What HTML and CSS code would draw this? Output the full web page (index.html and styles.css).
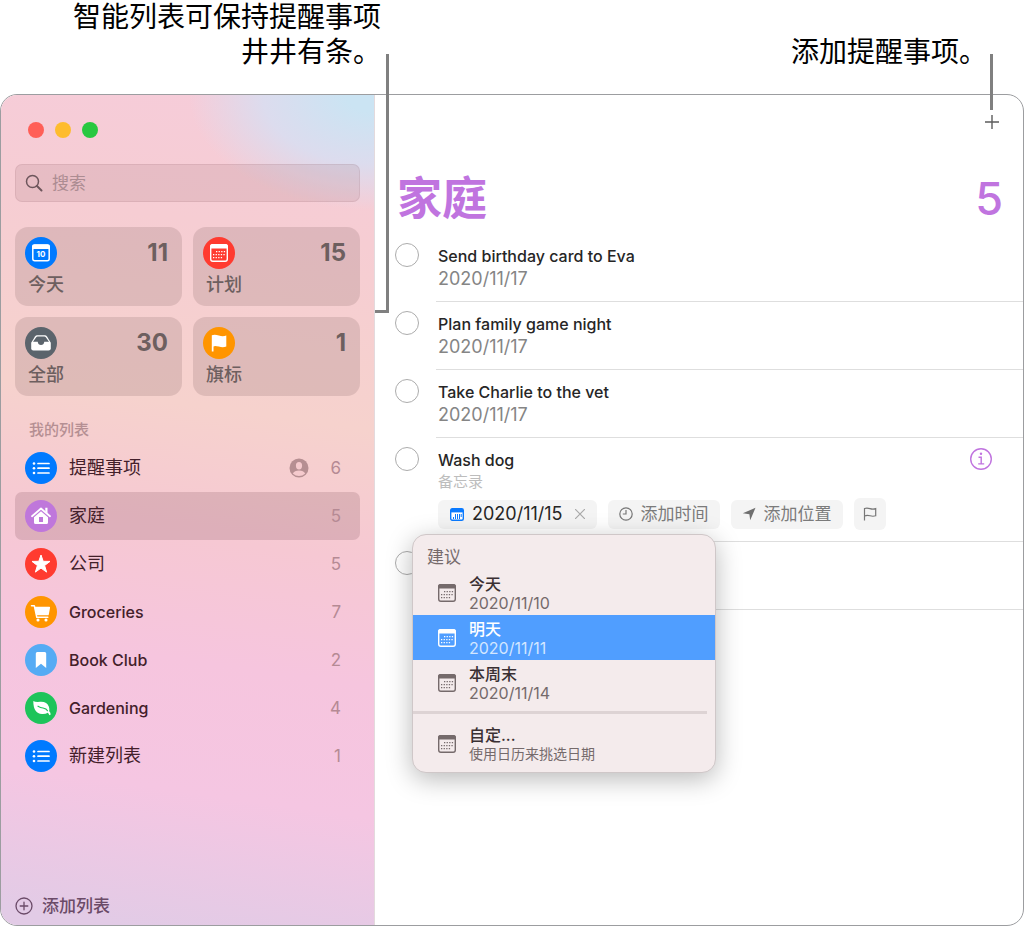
FILE: index.html
```html
<!DOCTYPE html>
<html lang="zh-CN">
<head>
  <meta charset="UTF-8">
  <meta name="viewport" content="width=device-width, initial-scale=1.0">
  <title>提醒事项</title>
  <link rel="stylesheet" href="styles.css">
</head>
<body>
  <svg class="defs" aria-hidden="true">
    <symbol id="i-cal" viewBox="0 0 20 20">
      <rect x="1.700" y="1.700" width="16.600" height="16.600" rx="2.200" fill="none" stroke="currentColor" stroke-width="1.400"/>
      <path d="M1 5.500V3.500A2.500 2.500 0 0 1 3.500 1h13A2.500 2.500 0 0 1 19 3.500V5.500z" fill="currentColor"/>
      <path d="M7 8.700h9.500M4 11.700h12.500M4 14.700h9.500" stroke="currentColor" stroke-width="1.300" stroke-dasharray="1.300 1.300" fill="none"/>
    </symbol>
    <symbol id="i-list" viewBox="0 0 32 32">
      <g fill="#fff"><circle cx="9" cy="11.500" r="1.300"/><circle cx="9" cy="16.200" r="1.300"/><circle cx="9" cy="21" r="1.300"/></g>
      <path d="M13 11.500h11M13 16.200h11M13 21h11" stroke="#fff" stroke-width="1.700" stroke-linecap="round"/>
    </symbol>
  </svg>

  <header class="callouts">
    <p class="callout callout-left">智能列表可保持提醒事项<br>井井有条。</p>
    <p class="callout callout-right">添加提醒事项。</p>
    <div class="line line-left"></div>
    <div class="line line-right"></div>
  </header>

  <div class="window">
    <aside class="sidebar">
      <div class="lights">
        <span class="light red"></span>
        <span class="light yellow"></span>
        <span class="light green"></span>
      </div>

      <label class="search">
        <svg viewBox="0 0 18 18" width="18" height="18" fill="none" stroke="#6d565c" stroke-width="1.500" stroke-linecap="round"><circle cx="7.500" cy="7.500" r="6"/><path d="M12 12l4.500 4.500" stroke-width="2"/></svg>
        <input type="search" placeholder="搜索" aria-label="搜索">
      </label>

      <div class="tiles">
        <button class="tile">
          <span class="icon blue"><svg viewBox="0 0 32 32"><rect x="7.800" y="8.300" width="16.400" height="15.400" rx="2" fill="none" stroke="#fff" stroke-width="1.500"/><path d="M7 12V9.500a2.200 2.200 0 0 1 2.200-2.200h13.600A2.200 2.200 0 0 1 25 9.500V12z" fill="#fff"/><text x="16" y="20" class="day">10</text></svg></span>
          <span class="count">11</span>
          <span class="name">今天</span>
        </button>
        <button class="tile">
          <span class="icon red"><svg class="cal" viewBox="0 0 20 20"><use href="#i-cal"/></svg></span>
          <span class="count">15</span>
          <span class="name">计划</span>
        </button>
        <button class="tile">
          <span class="icon slate"><svg viewBox="0 0 32 32"><path d="M6.200 15.800L10 9.500q.8-1.300 2.200-1.300h7.600q1.400 0 2.200 1.300l3.800 6.300v5.400q0 2.200-2.200 2.200H8.400q-2.200 0-2.200-2.200z" fill="#fff"/><path d="M8 14.700l3.200-4.500q.5-.7 1.400-.7h6.800q.9 0 1.400.7l3.200 4.500h-4.700q-.5 3.300-3.300 3.300t-3.300-3.300z" fill="#5b646c"/></svg></span>
          <span class="count">30</span>
          <span class="name">全部</span>
        </button>
        <button class="tile">
          <span class="icon orange"><svg viewBox="0 0 32 32" fill="#fff"><path d="M8.800 8.300q3-1.200 7 .3t7.500 0v11q-3.500 1.300-7.500 0t-5.300-.2v5.100H8.800z"/></svg></span>
          <span class="count">1</span>
          <span class="name">旗标</span>
        </button>
      </div>

      <h2 class="group">我的列表</h2>
      <ul class="lists">
        <li>
          <span class="icon blue"><svg><use href="#i-list"/></svg></span>
          <span class="title">提醒事项</span>
          <svg class="shared" viewBox="0 0 20 20"><circle cx="10" cy="10" r="9.500" fill="#b68f92"/><ellipse cx="10" cy="7.800" rx="3.100" ry="3.700" fill="#f5cacd"/><path d="M3.800 15.500q1.600-3 6.200-3t6.200 3Q13.500 18 10 18t-6.200-2.500z" fill="#f5cacd"/></svg>
          <span class="num">6</span>
        </li>
        <li class="active">
          <span class="icon purple"><svg viewBox="0 0 32 32"><path d="M7 16.200l9-7.700 9 7.700" fill="none" stroke="#fff" stroke-width="1.800" stroke-linecap="round" stroke-linejoin="round"/><path d="M20.300 7.800h2.200v5.500l-2.200-1.900zM9 17.200l7-6 7 6v5.300q0 1.500-1.500 1.500h-11Q9 24 9 22.500z" fill="#fff"/><path d="M14 17h4v5h-4z" fill="#bf77db"/></svg></span>
          <span class="title">家庭</span>
          <span class="num">5</span>
        </li>
        <li>
          <span class="icon red"><svg viewBox="0 0 32 32"><path d="M16 7l2.200 6.300 6.800.1-5.400 4.100 2 6.600-5.600-4-5.600 4 2-6.600L7 13.400l6.800-.1z" fill="#fff" stroke="#fff" stroke-linejoin="round"/></svg></span>
          <span class="title">公司</span>
          <span class="num">5</span>
        </li>
        <li>
          <span class="icon orange"><svg viewBox="0 0 32 32" fill="none" stroke="#fff" stroke-width="1.500" stroke-linecap="round" stroke-linejoin="round"><path d="M6.500 9.700H9.300L11.800 21.300H22.800"/><path d="M10.300 11.500h14l-1.300 7H11.800z" fill="#fff"/><circle cx="13" cy="24" r=".8" fill="#fff"/><circle cx="21" cy="24" r=".8" fill="#fff"/></svg></span>
          <span class="title" lang="en">Groceries</span>
          <span class="num">7</span>
        </li>
        <li>
          <span class="icon sky"><svg viewBox="0 0 32 32" fill="#fff"><path d="M10.800 9.500q0-1.500 1.500-1.500h7.400q1.500 0 1.500 1.500V24L16 19.800 10.800 24z"/></svg></span>
          <span class="title" lang="en">Book Club</span>
          <span class="num">2</span>
        </li>
        <li>
          <span class="icon green"><svg viewBox="0 0 32 32"><path d="M8.300 9q2 1.300 6.800.8 6.800-.5 8.800 5 .8 2.500.3 4.500 1.300 1 1.500 3.200l-1.300.7q-.7-1.800-1.600-2.500-2.300 1.500-5.800 1.300Q8.300 21.500 8.300 9z" fill="#fff"/><path d="M13 14.200q2.500 1.500 5 1.800 3.500.6 4.500 2.800" stroke="#1dc45a" stroke-width="1.100" fill="none" stroke-linecap="round"/></svg></span>
          <span class="title" lang="en">Gardening</span>
          <span class="num">4</span>
        </li>
        <li>
          <span class="icon blue"><svg><use href="#i-list"/></svg></span>
          <span class="title">新建列表</span>
          <span class="num">1</span>
        </li>
      </ul>

      <button class="add-list">
        <svg viewBox="0 0 18 18" width="18" height="18" fill="none" stroke="#6b4b68" stroke-width="1.300" stroke-linecap="round"><circle cx="9" cy="9" r="8"/><path d="M9 5.200v7.600M5.200 9h7.600"/></svg>
        添加列表
      </button>
    </aside>

    <main class="content">
      <div class="toolbar">
        <button class="plus" aria-label="添加提醒事项">
          <svg viewBox="0 0 14 14" width="14" height="14" stroke="#5c5c5c" stroke-width="1.400"><path d="M7 0v14M0 7h14"/></svg>
        </button>
      </div>
      <div class="heading">
        <h1>家庭</h1>
        <span class="total">5</span>
      </div>

      <ul class="reminders">
        <li>
          <input type="checkbox" id="r1">
          <div class="body">
            <label for="r1">Send birthday card to Eva</label>
            <div class="date">2020/11/17</div>
          </div>
        </li>
        <li>
          <input type="checkbox" id="r2">
          <div class="body">
            <label for="r2">Plan family game night</label>
            <div class="date">2020/11/17</div>
          </div>
        </li>
        <li>
          <input type="checkbox" id="r3">
          <div class="body">
            <label for="r3">Take Charlie to the vet</label>
            <div class="date">2020/11/17</div>
          </div>
        </li>
        <li class="editing">
          <input type="checkbox" id="r4">
          <div class="body">
            <label for="r4">Wash dog</label>
            <input class="note" type="text" placeholder="备忘录" aria-label="备忘录">
            <div class="chips">
              <button class="chip chip-date">
                <svg viewBox="0 0 14 13" width="14" height="13"><rect x=".7" y=".7" width="12.600" height="11.600" rx="1.500" fill="#fff" stroke="#0a7aff" stroke-width="1.400"/><path d="M1 1h12v3.400H1z" fill="#0a7aff"/><path d="M3.500 9v2M5.500 6v5M7.500 6v5M9.500 6v5M11.200 6v3" stroke="#0a7aff"/></svg>
                2020/11/15
                <svg class="clear" viewBox="0 0 10 10" width="10" height="10" stroke="#a9a9a9" stroke-width="1.200"><path d="M0 0l10 10M10 0L0 10"/></svg>
              </button>
              <button class="chip">
                <svg viewBox="0 0 14 14" width="14" height="14" fill="none" stroke="#777" stroke-width="1.200"><circle cx="7" cy="7" r="6.200"/><path d="M7 3v4H3.800"/></svg>
                添加时间
              </button>
              <button class="chip">
                <svg viewBox="0 0 14 14" width="14" height="14" fill="#6f6f6f"><path d="M13.500.8L8.200 13.200 7.400 7.200.8 6.300z"/></svg>
                添加位置
              </button>
              <button class="chip chip-flag" aria-label="旗标">
                <svg viewBox="0 0 14 14" width="14" height="14" fill="none" stroke="#777" stroke-width="1.200"><path d="M1.500 13.500V1.500q2.500-.9 5.500.1t5.700 0v7.200q-2.700.9-5.700 0t-5.500.2"/></svg>
              </button>
            </div>
          </div>
          <button class="info" aria-label="详细信息">
            <svg viewBox="0 0 24 24" width="24" height="24" fill="none" stroke="#c074df" stroke-width="1.400"><circle cx="12" cy="12" r="10.300"/><path d="M9.500 10.200h2.700v6.600M9.200 16.900h6"/><circle cx="12" cy="6.800" r="1.200" fill="#c074df" stroke="none"/></svg>
          </button>

          <div class="popover">
            <div class="pop-title">建议</div>
            <button class="option">
              <svg><use href="#i-cal"/></svg>
              <span><strong>今天</strong><time>2020/11/10</time></span>
            </button>
            <button class="option selected">
              <svg><use href="#i-cal"/></svg>
              <span><strong>明天</strong><time>2020/11/11</time></span>
            </button>
            <button class="option">
              <svg><use href="#i-cal"/></svg>
              <span><strong>本周末</strong><time>2020/11/14</time></span>
            </button>
            <hr>
            <button class="option">
              <svg><use href="#i-cal"/></svg>
              <span><strong>自定...</strong><small>使用日历来挑选日期</small></span>
            </button>
          </div>
        </li>
        <li>
          <input type="checkbox" aria-label="新提醒事项">
          <div class="body"></div>
        </li>
      </ul>
    </main>
  </div>
</body>
</html>
```
FILE: styles.css
```css
:root {
  --purple: #c074df;
  --line: #dedede;
  --edge: #9c9da0;
}

* {
  box-sizing: border-box;
}

body {
  display: flex;
  flex-direction: column;
  position: relative;
  min-height: 100vh;
  margin: 0;
  padding-right: 3px;
  background: #fff;
  color: #262626;
  font-family: Inter, "Noto Sans CJK SC", sans-serif;
  font-size: 17px;
  line-height: 24px;
}

button, input {
  font: inherit;
  color: inherit;
  border: 0;
  background: none;
  padding: 0;
  margin: 0;
}

ul {
  list-style: none;
  margin: 0;
  padding: 0;
}

h1, h2, p {
  margin: 0;
}

svg {
  display: block;
  flex: none;
}

.defs {
  position: absolute;
  width: 0;
  height: 0;
}

/* callouts above the window */
.callouts {
  display: flex;
  justify-content: space-between;
  align-items: flex-end;
  height: 94px;
  padding: 0 37px 24px 0;
}

.callout {
  color: #000;
  font-size: 28px;
  line-height: 35px;
}

.callout-left {
  width: 381px;
  text-align: right;
}

.line {
  position: absolute;
  z-index: 2;
  border: 0 solid #808080;
}

.line-left {
  top: 54px;
  left: 375px;
  width: 14px;
  height: 259px;
  border-right-width: 3px;
  border-bottom-width: 3px;
}

.line-right {
  top: 54px;
  right: 34px;
  height: 56px;
  border-right-width: 3px;
}

/* window */
.window {
  display: flex;
  flex: 1;
  border: 1px solid var(--edge);
  border-radius: 17px;
  background: #fff;
}

.sidebar {
  display: flex;
  flex-direction: column;
  flex: 0 0 374px;
  padding: 27px 14px 7px 14px;
  border-right: 1px solid #e3dadd;
  border-radius: 16px 0 0 16px;
  background:
    radial-gradient(ellipse 185px 115px at 100% 0, #cbe4f3 15%, #dcdcee 60%, rgba(246, 209, 221, 0) 100%),
    linear-gradient(188deg, #f6ccda 0, #f6cdd3 17%, #f6d2cd 38%, #f6c8d3 53%, #f6c5de 67%, #f5c6e2 82%, #e2cbe6 98%);
}

.lights {
  display: flex;
  gap: 11px;
  padding-left: 13px;
}

.light {
  width: 16px;
  height: 16px;
  border-radius: 50%;
}

.red { background: #ff3b30; }
.light.red { background: #ff5f57; }
.light.yellow { background: #febc2e; }
.green { background: #1dc45a; }
.light.green { background: #28c840; }
.blue { background: #007aff; }
.slate { background: #5b646c; }
.orange { background: #ff9500; }
.purple { background: #bf77db; }
.sky { background: #55abf4; }

.search {
  display: flex;
  align-items: center;
  gap: 9px;
  height: 38px;
  margin: 26px 0 25px;
  padding: 0 9px;
  border: 1px solid rgba(120, 70, 80, 0.1);
  border-radius: 7px;
  background: rgba(140, 90, 100, 0.14);
}

.search input {
  flex: 1;
  min-width: 0;
  outline: 0;
}

.search input::placeholder {
  color: #ac8c92;
  opacity: 1;
}

.tiles {
  display: grid;
  grid-template-columns: 1fr 1fr;
  gap: 11px;
}

.tile {
  display: grid;
  grid-template-columns: 32px 1fr;
  align-content: start;
  align-items: center;
  gap: 4px;
  height: 79px;
  padding: 10px 14px 0 10px;
  border-radius: 13px;
  background: rgba(120, 90, 90, 0.19);
  color: #6d5f5f;
}

.icon {
  display: flex;
  align-items: center;
  justify-content: center;
  flex: none;
  width: 32px;
  height: 32px;
  border-radius: 50%;
  color: #fff;
}

.icon svg {
  width: 32px;
  height: 32px;
}

.icon .cal {
  width: 20px;
  height: 20px;
}

.day {
  fill: #fff;
  font-size: 8px;
  font-weight: 700;
  text-anchor: middle;
}

.count {
  font-size: 24px;
  font-weight: 700;
  text-align: right;
}

.name {
  grid-column: 1 / 3;
  padding-left: 3px;
  font-size: 18px;
  font-weight: 500;
  text-align: left;
}

.group {
  margin: 22px 14px 2px;
  color: #b58f93;
  font-size: 15px;
  font-weight: 500;
}

.lists li {
  display: flex;
  align-items: center;
  height: 48px;
  padding: 0 19px 0 10px;
  border-radius: 7px;
}

.lists .active {
  background: rgba(110, 60, 70, 0.18);
}

.lists .title {
  flex: 1;
  padding-left: 12px;
  color: #43202a;
  font-size: 18px;
}

.lists .title:lang(en) {
  font-size: 16px;
  font-weight: 500;
}

.shared {
  width: 20px;
  height: 20px;
}

.num {
  width: 32px;
  color: #b58a94;
  text-align: right;
}

.add-list {
  display: flex;
  align-items: center;
  gap: 9px;
  align-self: flex-start;
  margin-top: auto;
  color: #6b4b68;
  font-weight: 500;
}

/* reminders */
.content {
  flex: 1;
  min-width: 0;
  padding-left: 20px;
}

.toolbar {
  display: flex;
  justify-content: flex-end;
  padding: 20px 24px 0 0;
}

.heading {
  display: flex;
  align-items: center;
  justify-content: space-between;
  height: 70px;
  margin-top: 35px;
  padding: 0 20px 0 2px;
  color: var(--purple);
  font-size: 45px;
  line-height: 70px;
}

.heading h1 {
  font-size: 45px;
  font-weight: 700;
}

.total {
  font-weight: 500;
}

.reminders li {
  display: flex;
  position: relative;
  height: 68px;
}

.reminders .editing {
  height: 104px;
}

.reminders input[type="checkbox"] {
  appearance: none;
  width: 24px;
  height: 24px;
  margin-top: 9px;
  border: 1px solid #acacac;
  border-radius: 50%;
}

.reminders .body {
  flex: 1;
  min-width: 0;
  margin-left: 17px;
  padding: 10px 0 0 2px;
  border-bottom: 1px solid var(--line);
}

.body label {
  display: block;
  font-size: 16px;
  font-weight: 500;
}

.date {
  color: #858585;
  font-size: 18px;
  line-height: 22px;
}

.note {
  display: block;
  height: 20px;
  font-size: 15px;
  outline: 0;
}

.note::placeholder {
  color: #bdbdbd;
  opacity: 1;
}

.chips {
  display: flex;
  align-items: center;
  gap: 11px;
  margin-top: 6px;
}

.chip {
  display: flex;
  align-items: center;
  gap: 8px;
  height: 29px;
  padding: 0 11px;
  border-radius: 6px;
  background: #f4f4f4;
  color: #7b7b7b;
}

.chip-date {
  padding: 0 12px;
  color: #262626;
  font-size: 18px;
}

.clear {
  margin-left: 4px;
}

.chip-flag {
  height: 32px;
  padding: 0 9px;
}

.info {
  position: absolute;
  top: 9px;
  right: 30px;
}

.popover {
  position: absolute;
  z-index: 3;
  top: 96px;
  left: 17px;
  width: 304px;
  padding: 9px 0 6px;
  border: 1px solid #cfc7c8;
  border-radius: 14px;
  background: #f4ebec;
  box-shadow: 0 6px 26px rgba(0, 0, 0, 0.28);
}

.pop-title {
  padding-left: 14px;
  color: #756a6b;
  line-height: 26px;
}

.option {
  display: flex;
  align-items: center;
  gap: 12px;
  width: 100%;
  height: 45px;
  padding-left: 24px;
  color: #756a6b;
  text-align: left;
}

.option svg {
  width: 20px;
  height: 20px;
}

.option strong, .option small, .option time {
  display: block;
}

.option strong {
  color: #3a3033;
  font-size: 16px;
  font-weight: 500;
  line-height: 20px;
}

.option small, .option time {
  font-size: 14px;
  line-height: 18px;
}

.option time {
  font-size: 16px;
}

.selected {
  background: #509eff;
  color: #fff;
}

.selected strong {
  color: #fff;
}

.selected time {
  color: #d3e6ff;
}

.popover hr {
  height: 3px;
  margin: 6px 8px 7px 0;
  border: 0;
  background: #ddd3d4;
}
```
